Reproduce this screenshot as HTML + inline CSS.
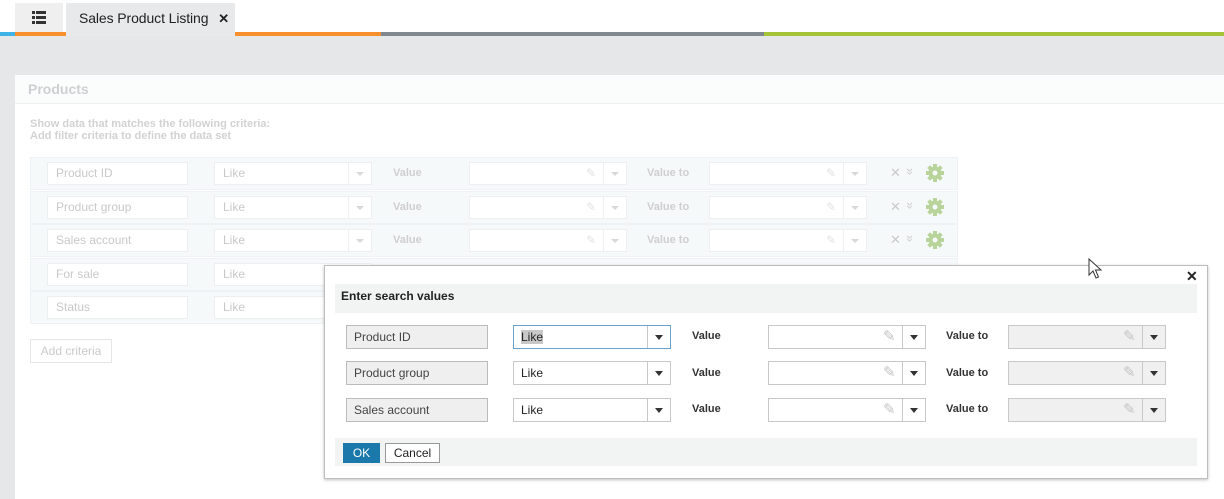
<!DOCTYPE html>
<html><head><meta charset="utf-8"><style>
*{box-sizing:border-box;margin:0;padding:0}
body{width:1224px;height:499px;overflow:hidden;background:#fff;font-family:"Liberation Sans",Arial,sans-serif;position:relative}
.a{position:absolute}
.f{position:absolute;border:1px solid #eceeef;background:#fff;color:#c9c9c9;font-size:12px;padding-left:8px;line-height:21px;height:23px}
.fl{position:absolute;color:#cfcfcf;font-size:11px;font-weight:bold}
.sep{position:absolute;top:0;bottom:0;width:1px;background:#eceeef}
.tri{position:absolute;width:0;height:0;border-left:4px solid transparent;border-right:4px solid transparent;border-top:4px solid #d8d8d8}
.row{position:absolute;left:30px;width:928px;height:33px;background:#f6f9fa;border:1px solid #eef2f4}
.d{position:absolute;border:1px solid #c8c8c8;background:#fff;height:24px;font-size:12px;line-height:22px;padding-left:7px;color:#222}
.dg{background:#efefef;color:#444;border-color:#bbb}
.dl{position:absolute;font-size:11px;font-weight:bold;color:#333}
.dsep{position:absolute;top:0;bottom:0;width:1px;background:#c8c8c8}
.dtri{position:absolute;width:0;height:0;border-left:4px solid transparent;border-right:4px solid transparent;border-top:5px solid #333}
.ch{position:absolute;font-size:13px;color:#d0d0d0;transform:rotate(90deg)}
</style></head><body>
<!-- top bar -->
<div class="a" style="left:15px;top:3px;width:48px;height:30px;background:#efefef"></div>
<svg class="a" style="left:32px;top:11px" width="14" height="13"><g fill="#333"><rect x="0" y="0" width="3" height="3"/><rect x="4" y="0" width="10" height="3"/><rect x="0" y="5" width="3" height="3"/><rect x="4" y="5" width="10" height="3"/><rect x="0" y="10" width="3" height="3"/><rect x="4" y="10" width="10" height="3"/></g></svg>
<div class="a" style="left:66px;top:3px;width:169px;height:34px;background:#e8e9ea;font-size:14px;color:#222;padding:7px 0 0 13px;letter-spacing:-0.1px">Sales Product Listing <span style="font-size:13px;font-weight:bold;margin-left:6px">✕</span></div>
<div class="a" style="left:0;top:32px;width:15px;height:4px;background:#3db4e5"></div>
<div class="a" style="left:15px;top:32px;width:51px;height:4px;background:#f7902d"></div>
<div class="a" style="left:235px;top:32px;width:146px;height:4px;background:#f7902d"></div>
<div class="a" style="left:381px;top:32px;width:383px;height:4px;background:#7f878f"></div>
<div class="a" style="left:764px;top:32px;width:460px;height:4px;background:#a6c43a"></div>
<div class="a" style="left:0;top:36px;width:1224px;height:463px;background:#e6e7e8"></div>
<div class="a" style="left:15px;top:75px;width:1209px;height:424px;background:#fff"></div>
<div class="a" style="left:15px;top:75px;width:1209px;height:29px;background:#fbfcfc;border-bottom:1px solid #eef0f1"></div>
<div class="a" style="left:28px;top:81px;font-size:14px;font-weight:bold;color:#cdd0d2">Products</div>
<div class="a" style="left:30px;top:118px;font-size:11px;font-weight:bold;color:#d2d2d2;line-height:12px">Show data that matches the following criteria:<br>Add filter criteria to define the data set</div>

<!-- faded rows -->
<div class="row" style="top:157px"></div>
<div class="row" style="top:191px"></div>
<div class="row" style="top:224px"></div>
<div class="row" style="top:258px"></div>
<div class="row" style="top:291px"></div>

<div class="f" style="left:47px;top:162px;width:141px">Product ID</div>
<div class="f" style="left:47px;top:196px;width:141px">Product group</div>
<div class="f" style="left:47px;top:229px;width:141px">Sales account</div>
<div class="f" style="left:47px;top:263px;width:141px">For sale</div>
<div class="f" style="left:47px;top:296px;width:141px">Status</div>

<div class="f" style="left:214px;top:162px;width:158px">Like<div class="sep" style="left:133px"></div><div class="tri" style="left:141px;top:9px"></div></div>
<div class="f" style="left:214px;top:196px;width:158px">Like<div class="sep" style="left:133px"></div><div class="tri" style="left:141px;top:9px"></div></div>
<div class="f" style="left:214px;top:229px;width:158px">Like<div class="sep" style="left:133px"></div><div class="tri" style="left:141px;top:9px"></div></div>
<div class="f" style="left:214px;top:263px;width:158px">Like</div>
<div class="f" style="left:214px;top:296px;width:158px">Like</div>

<div class="fl" style="left:393px;top:167px">Value</div>
<div class="fl" style="left:393px;top:201px">Value</div>
<div class="fl" style="left:393px;top:234px">Value</div>
<div class="fl" style="left:647px;top:167px">Value to</div>
<div class="fl" style="left:647px;top:201px">Value to</div>
<div class="fl" style="left:647px;top:234px">Value to</div>

<div class="f" style="left:469px;top:162px;width:158px"><span style="position:absolute;left:116px;top:0;color:#e4e4e4">✎</span><div class="sep" style="left:133px"></div><div class="tri" style="left:141px;top:9px"></div></div>
<div class="f" style="left:469px;top:196px;width:158px"><span style="position:absolute;left:116px;top:0;color:#e4e4e4">✎</span><div class="sep" style="left:133px"></div><div class="tri" style="left:141px;top:9px"></div></div>
<div class="f" style="left:469px;top:229px;width:158px"><span style="position:absolute;left:116px;top:0;color:#e4e4e4">✎</span><div class="sep" style="left:133px"></div><div class="tri" style="left:141px;top:9px"></div></div>
<div class="f" style="left:709px;top:162px;width:158px"><span style="position:absolute;left:116px;top:0;color:#e4e4e4">✎</span><div class="sep" style="left:133px"></div><div class="tri" style="left:141px;top:9px"></div></div>
<div class="f" style="left:709px;top:196px;width:158px"><span style="position:absolute;left:116px;top:0;color:#e4e4e4">✎</span><div class="sep" style="left:133px"></div><div class="tri" style="left:141px;top:9px"></div></div>
<div class="f" style="left:709px;top:229px;width:158px"><span style="position:absolute;left:116px;top:0;color:#e4e4e4">✎</span><div class="sep" style="left:133px"></div><div class="tri" style="left:141px;top:9px"></div></div>

<div class="a" style="left:890px;top:165px;font-size:13px;color:#c9c9c9">✕</div>
<div class="a" style="left:890px;top:199px;font-size:13px;color:#c9c9c9">✕</div>
<div class="a" style="left:890px;top:232px;font-size:13px;color:#c9c9c9">✕</div>
<div class="ch" style="left:907px;top:164px">»</div>
<div class="ch" style="left:907px;top:198px">»</div>
<div class="ch" style="left:907px;top:231px">»</div>
<style>.g{position:absolute;width:20px;height:20px}</style>
<svg class="g" style="left:925px;top:163px" viewBox="0 0 20 20"><g fill="#b9d49a"><circle cx="10" cy="10" r="6.5"/><rect x="8" y="1" width="4" height="18"/><rect x="1" y="8" width="18" height="4"/><rect x="8" y="1" width="4" height="18" transform="rotate(45 10 10)"/><rect x="8" y="1" width="4" height="18" transform="rotate(-45 10 10)"/></g><circle cx="10" cy="10" r="2.5" fill="#f6f9fa"/></svg>
<svg class="g" style="left:925px;top:197px" viewBox="0 0 20 20"><g fill="#b9d49a"><circle cx="10" cy="10" r="6.5"/><rect x="8" y="1" width="4" height="18"/><rect x="1" y="8" width="18" height="4"/><rect x="8" y="1" width="4" height="18" transform="rotate(45 10 10)"/><rect x="8" y="1" width="4" height="18" transform="rotate(-45 10 10)"/></g><circle cx="10" cy="10" r="2.5" fill="#f6f9fa"/></svg>
<svg class="g" style="left:925px;top:230px" viewBox="0 0 20 20"><g fill="#b9d49a"><circle cx="10" cy="10" r="6.5"/><rect x="8" y="1" width="4" height="18"/><rect x="1" y="8" width="18" height="4"/><rect x="8" y="1" width="4" height="18" transform="rotate(45 10 10)"/><rect x="8" y="1" width="4" height="18" transform="rotate(-45 10 10)"/></g><circle cx="10" cy="10" r="2.5" fill="#f6f9fa"/></svg>

<div class="a" style="left:30px;top:339px;width:82px;height:24px;border:1px solid #e6e6e6;font-size:12px;color:#cacaca;text-align:center;line-height:22px">Add criteria</div>

<!-- dialog -->
<div class="a" style="left:324px;top:265px;width:884px;height:214px;background:#fff;border:1px solid #bdbdbd;box-shadow:0 1px 3px rgba(0,0,0,.25)"></div>
<div class="a" style="left:1186px;top:268px;font-size:14px;font-weight:bold;color:#222">✕</div>
<div class="a" style="left:335px;top:284px;width:862px;height:29px;background:#f2f3f3"></div>
<div class="a" style="left:341px;top:289px;font-size:12px;font-weight:bold;color:#222">Enter search values</div>

<div class="d dg" style="left:346px;top:325px;width:142px">Product ID</div>
<div class="d dg" style="left:346px;top:361px;width:142px">Product group</div>
<div class="d dg" style="left:346px;top:398px;width:142px">Sales account</div>

<div class="d" style="left:513px;top:325px;width:158px;border-color:#6aa2cf"><span style="background:#c8c8c8">Like</span><div class="dsep" style="left:133px"></div><div class="dtri" style="left:141px;top:9px"></div></div>
<div class="d" style="left:513px;top:361px;width:158px">Like<div class="dsep" style="left:133px"></div><div class="dtri" style="left:141px;top:9px"></div></div>
<div class="d" style="left:513px;top:398px;width:158px">Like<div class="dsep" style="left:133px"></div><div class="dtri" style="left:141px;top:9px"></div></div>

<div class="dl" style="left:692px;top:330px">Value</div>
<div class="dl" style="left:692px;top:367px">Value</div>
<div class="dl" style="left:692px;top:403px">Value</div>
<div class="dl" style="left:946px;top:330px">Value to</div>
<div class="dl" style="left:946px;top:367px">Value to</div>
<div class="dl" style="left:946px;top:403px">Value to</div>

<div class="d" style="left:768px;top:325px;width:158px"><span style="position:absolute;left:114px;top:0;color:#c4c4c4;font-size:15px">✎</span><div class="dsep" style="left:133px"></div><div class="dtri" style="left:141px;top:9px"></div></div>
<div class="d" style="left:768px;top:361px;width:158px"><span style="position:absolute;left:114px;top:0;color:#c4c4c4;font-size:15px">✎</span><div class="dsep" style="left:133px"></div><div class="dtri" style="left:141px;top:9px"></div></div>
<div class="d" style="left:768px;top:398px;width:158px"><span style="position:absolute;left:114px;top:0;color:#c4c4c4;font-size:15px">✎</span><div class="dsep" style="left:133px"></div><div class="dtri" style="left:141px;top:9px"></div></div>
<div class="d" style="left:1008px;top:325px;width:158px;background:#f0f0f0"><span style="position:absolute;left:114px;top:0;color:#c4c4c4;font-size:15px">✎</span><div class="dsep" style="left:133px"></div><div class="dtri" style="left:141px;top:9px"></div></div>
<div class="d" style="left:1008px;top:361px;width:158px;background:#f0f0f0"><span style="position:absolute;left:114px;top:0;color:#c4c4c4;font-size:15px">✎</span><div class="dsep" style="left:133px"></div><div class="dtri" style="left:141px;top:9px"></div></div>
<div class="d" style="left:1008px;top:398px;width:158px;background:#f0f0f0"><span style="position:absolute;left:114px;top:0;color:#c4c4c4;font-size:15px">✎</span><div class="dsep" style="left:133px"></div><div class="dtri" style="left:141px;top:9px"></div></div>

<div class="a" style="left:335px;top:438px;width:862px;height:28px;background:#f2f3f3"></div>
<div class="a" style="left:343px;top:443px;width:37px;height:20px;background:#1a78aa;color:#fff;font-size:12px;text-align:center;line-height:20px">OK</div>
<div class="a" style="left:385px;top:443px;width:55px;height:20px;background:#fff;border:1px solid #999;color:#222;font-size:12px;text-align:center;line-height:18px">Cancel</div>

<!-- cursor -->
<svg class="a" style="left:1088px;top:258px" width="16" height="22" viewBox="0 0 16 22"><path d="M1 1 L1 17 L5 13 L8 20 L10.5 19 L7.5 12 L13 12 Z" fill="#fff" stroke="#333" stroke-width="1"/></svg>
</body></html>
